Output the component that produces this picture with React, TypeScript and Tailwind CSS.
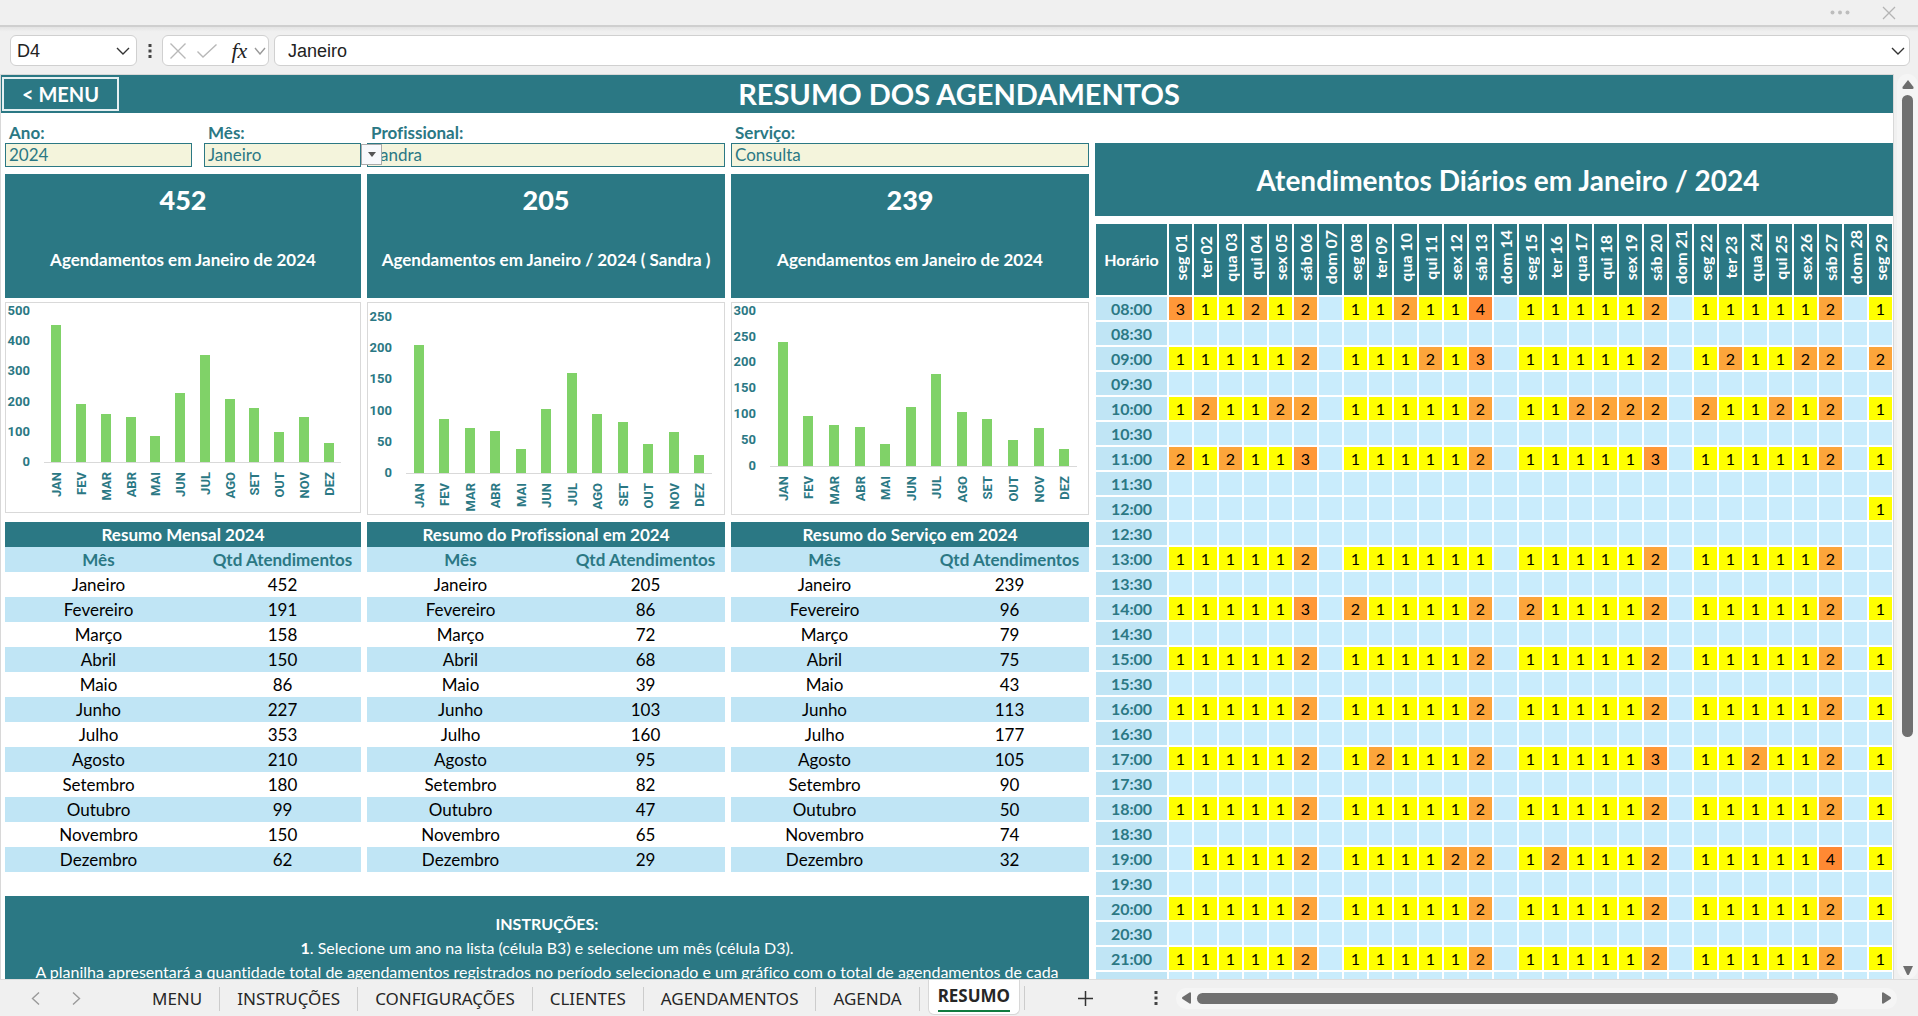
import React from "react";

const MONTHS = ["Janeiro", "Fevereiro", "Março", "Abril", "Maio", "Junho", "Julho", "Agosto", "Setembro", "Outubro", "Novembro", "Dezembro"];
const SHORT = ["JAN", "FEV", "MAR", "ABR", "MAI", "JUN", "JUL", "AGO", "SET", "OUT", "NOV", "DEZ"];

type Chart = {
  width: number;
  height: number;
  ticks: number[];
  tickRight: number;
  zeroY: number;
  tickGap: number;
  axisFrom: number;
  axisTo: number;
};

type Summary = { total: string; caption: string; heading: string; values: number[]; chart: Chart };

const SUMMARIES: Summary[] = [
  {
    total: "452",
    caption: "Agendamentos em Janeiro de 2024",
    heading: "Resumo Mensal 2024",
    values: [452, 191, 158, 150, 86, 227, 353, 210, 180, 99, 150, 62],
    chart: { width: 356, height: 211, ticks: [0, 100, 200, 300, 400, 500], tickRight: 25, zeroY: 160, tickGap: 30.2, axisFrom: 39, axisTo: 336 },
  },
  {
    total: "205",
    caption: "Agendamentos em Janeiro / 2024 ( Sandra )",
    heading: "Resumo do Profissional em 2024",
    values: [205, 86, 72, 68, 39, 103, 160, 95, 82, 47, 65, 29],
    chart: { width: 358, height: 213, ticks: [0, 50, 100, 150, 200, 250], tickRight: 25, zeroY: 171, tickGap: 31.2, axisFrom: 39, axisTo: 345 },
  },
  {
    total: "239",
    caption: "Agendamentos em Janeiro de 2024",
    heading: "Resumo do Serviço em 2024",
    values: [239, 96, 79, 75, 43, 113, 177, 105, 90, 50, 74, 32],
    chart: { width: 358, height: 213, ticks: [0, 50, 100, 150, 200, 250, 300], tickRight: 25, zeroY: 164, tickGap: 25.9, axisFrom: 39, axisTo: 346 },
  },
];

const WEEKDAYS = ["seg", "ter", "qua", "qui", "sex", "sáb", "dom"];
const DAYS = Array.from({ length: 29 }, (_, i) => `${WEEKDAYS[i % 7]} ${String(i + 1).padStart(2, "0")}`);

const FULL = "111112.111112.111112.111112.1";
const EMPTY = ".............................";
const HOURS: [string, string][] = [
  ["08:00", "311212.112114.111112.111112.1"],
  ["08:30", EMPTY],
  ["09:00", "111112.111213.111112.121122.2"],
  ["09:30", EMPTY],
  ["10:00", "121122.111112.112222.211212.1"],
  ["10:30", EMPTY],
  ["11:00", "212113.111112.111113.111112.1"],
  ["11:30", EMPTY],
  ["12:00", "............................1"],
  ["12:30", EMPTY],
  ["13:00", "111112.111111.111112.111112.."],
  ["13:30", EMPTY],
  ["14:00", "111113.211112.211112.111112.1"],
  ["14:30", EMPTY],
  ["15:00", FULL],
  ["15:30", EMPTY],
  ["16:00", FULL],
  ["16:30", EMPTY],
  ["17:00", "111112.121112.111113.112112.1"],
  ["17:30", EMPTY],
  ["18:00", FULL],
  ["18:30", EMPTY],
  ["19:00", ".11112.111122.121112.111114.1"],
  ["19:30", EMPTY],
  ["20:00", FULL],
  ["20:30", EMPTY],
  ["21:00", FULL],
  ["", EMPTY],
];

const HEAT: Record<string, string> = {
  "1": "bg-[#ffff00]",
  "2": "bg-[#fda53a]",
  "3": "bg-[#ff9838]",
  "4": "bg-[#ff8933]",
  ".": "bg-[#c9ecfc]",
};

const TABS = ["MENU", "INSTRUÇÕES", "CONFIGURAÇÕES", "CLIENTES", "AGENDAMENTOS", "AGENDA"];

function Chevron({ d, className, w = 14, h = 8 }: { d: string; className: string; w?: number; h?: number }) {
  return (
    <svg width={w} height={h} viewBox={`0 0 ${w} ${h}`} fill="none" stroke="currentColor" strokeWidth="1.4" className={className}>
      <path d={d} />
    </svg>
  );
}

function VerticalDots() {
  return (
    <svg width="4" height="16" viewBox="0 0 4 16" fill="#444444">
      <rect x="0.5" y="1" width="3" height="3" />
      <rect x="0.5" y="6.500" width="3" height="3" />
      <rect x="0.5" y="12" width="3" height="3" />
    </svg>
  );
}

function TitleStrip() {
  return (
    <div className="flex h-[27px] shrink-0 items-center justify-end gap-8 border-b-2 border-[#cfcfcf] bg-[#f0f0f0] pr-[22px]">
      <button aria-label="Mais opções">
        <svg width="20" height="5" viewBox="0 0 20 5" fill="#bdbdbd">
          <circle cx="2.500" cy="2.500" r="2" />
          <circle cx="10" cy="2.500" r="2" />
          <circle cx="17.500" cy="2.500" r="2" />
        </svg>
      </button>
      <button aria-label="Fechar">
        <svg width="14" height="14" viewBox="0 0 14 14" stroke="#b4b4b4" strokeWidth="1.3">
          <path d="M1 1 13 13M13 1 1 13" />
        </svg>
      </button>
    </div>
  );
}

function FormulaBar() {
  return (
    <div className="flex h-[47px] shrink-0 items-center bg-linear-to-b from-[#e4e4e4] to-[#f0f0f0] to-10% pr-2 pl-[10px] font-['Liberation_Sans',sans-serif] text-lg text-[#222222]">
      <div className="flex h-[31px] w-[127px] items-center justify-between rounded-md border border-[#d0d0d0] bg-white pr-1.5 pl-1.5">
        <input aria-label="Caixa de nome" defaultValue="D4" className="w-16 bg-transparent outline-none" />
        <Chevron d="M1 1 7 7 13 1" className="text-[#333333]" />
      </div>
      <div className="flex w-[25px] justify-center">
        <VerticalDots />
      </div>
      <div className="flex h-[31px] w-[107px] items-center justify-between rounded-md border border-[#d0d0d0] bg-white pr-0.5 pl-[7px]">
        <button aria-label="Cancelar">
          <svg width="16" height="16" viewBox="0 0 16 16" stroke="#b8b8b8" strokeWidth="1.4">
            <path d="M0.500 0.500 15.500 15.500M15.500 0.500 0.500 15.500" />
          </svg>
        </button>
        <button aria-label="Inserir" className="pl-1">
          <svg width="20" height="14" viewBox="0 0 20 14" fill="none" stroke="#b8b8b8" strokeWidth="1.400">
            <path d="M0.500 7.500 6 13 19.500 0.500" />
          </svg>
        </button>
        <button aria-label="Inserir função" className="pl-2 font-['Liberation_Serif',serif] text-[22px] leading-5 text-[#222222] italic">
          fx
        </button>
        <Chevron d="M1 1 6 7 11 1" w={12} className="text-[#999999]" />
      </div>
      <div className="ml-[5px] flex h-[31px] flex-1 items-center rounded-md border border-[#d0d0d0] bg-white pr-1 pl-[13px]">
        <input aria-label="Barra de fórmulas" defaultValue="Janeiro" className="flex-1 bg-transparent outline-none" />
        <Chevron d="M1 1 7 7 13 1" className="text-[#333333]" />
      </div>
    </div>
  );
}

function Filter({ id, label, value, children }: { id: string; label: string; value: string; children?: React.ReactNode }) {
  return (
    <div className="relative">
      <label htmlFor={id} className="block h-5 pl-1 leading-5 font-bold text-[#2b7884]">
        {label}
      </label>
      <select id={id} className="block h-6 w-full appearance-none border border-[#2b7884] bg-[#f4f4dc] pl-[3px] leading-[22px] text-[#2b7884]">
        <option>{value}</option>
      </select>
      {children}
    </div>
  );
}

function BarChart({ values, chart }: { values: number[]; chart: Chart }) {
  const step = (chart.axisTo - chart.axisFrom) / 12;
  const unit = chart.tickGap / chart.ticks[1];
  return (
    <svg
      viewBox={`0 0 ${chart.width} ${chart.height}`}
      className="block w-full font-['Roboto',sans-serif] text-[13px] font-bold"
      fill="#2b7884"
      shapeRendering="crispEdges"
    >
      <rect x="0.5" y="0.5" width={chart.width - 1} height={chart.height - 1} fill="#ffffff" stroke="#d9d9d9" />
      {chart.ticks.map((tick, i) => (
        <text key={tick} x={chart.tickRight} y={Math.round(chart.zeroY - i * chart.tickGap + 4)} textAnchor="end">
          {tick}
        </text>
      ))}
      {values.map((value, i) => {
        const center = chart.axisFrom + step * (i + 0.5);
        return (
          <React.Fragment key={SHORT[i]}>
            <rect x={Math.round(center - 5)} y={Math.round(chart.zeroY - value * unit)} width="10" height={Math.round(value * unit)} fill="#80d268" />
            <text textAnchor="end" transform={`translate(${center + 5} ${chart.zeroY + 10}) rotate(-90)`}>
              {SHORT[i]}
            </text>
          </React.Fragment>
        );
      })}
      <rect x={chart.axisFrom} y={chart.zeroY} width={chart.axisTo - chart.axisFrom} height="1" fill="#d9d9d9" />
    </svg>
  );
}

function SummaryColumn({ item }: { item: Summary }) {
  return (
    <section>
      <div className="flex h-[124px] flex-col items-center bg-[#2b7884] font-bold text-white">
        <strong className="mt-2.5 text-[27px] leading-8">{item.total}</strong>
        <span className="mt-8 leading-6">{item.caption}</span>
      </div>
      <div className="mt-1 h-[220px]">
        <BarChart values={item.values} chart={item.chart} />
      </div>
      <table className="w-full table-fixed border-collapse text-center text-black">
        <colgroup>
          <col className="w-[187px]" />
          <col />
        </colgroup>
        <thead>
          <tr className="h-[25px] bg-[#2b7884] leading-5 text-white">
            <th colSpan={2} className="p-0">{item.heading}</th>
          </tr>
          <tr className="h-[25px] bg-[#c0e5f5] leading-5 text-[#2b7884]">
            <th className="p-0">Mês</th>
            <th className="p-0 pl-3">Qtd Atendimentos</th>
          </tr>
        </thead>
        <tbody>
          {MONTHS.map((month, i) => (
            <tr key={month} className="h-[25px] leading-5 even:bg-[#c0e5f5]">
              <td className="p-0">{month}</td>
              <td className="p-0 pl-3">{item.values[i]}</td>
            </tr>
          ))}
        </tbody>
      </table>
    </section>
  );
}

function DailyPanel() {
  return (
    <section className="pt-[30px] text-base">
      <h2 className="flex h-[73px] items-center justify-center bg-[#2b7884] pl-7 text-[28px] font-bold text-white">
        Atendimentos Diários em Janeiro / 2024
      </h2>
      <div className="pt-2 pr-px">
        <table className="w-full table-fixed border-separate border-spacing-0 text-center leading-5">
          <colgroup>
            <col className="w-[72px]" />
            {DAYS.map((day) => (
              <col key={day} />
            ))}
          </colgroup>
          <thead>
            <tr className="h-[73px] text-white">
              <th className="border-b-2 border-l border-white bg-[#2b7884] p-0">Horário</th>
              {DAYS.map((day) => (
                <th key={day} className="border-b-2 border-l-2 border-white bg-[#2b7884] p-0">
                  <span className="inline-block rotate-180 whitespace-nowrap [writing-mode:vertical-rl]">{day}</span>
                </th>
              ))}
            </tr>
          </thead>
          <tbody>
            {HOURS.map(([hour, counts], row) => (
              <tr key={row} className="h-[25px]">
                <th className="border-b-2 border-l border-white bg-[#c0e5f5] p-0 text-[#2b7884]">{hour}</th>
                {counts.split("").map((count, i) => (
                  <td key={DAYS[i]} className={`border-b-2 border-l-2 border-white p-0 text-black ${HEAT[count]}`}>
                    {count === "." ? "" : count}
                  </td>
                ))}
              </tr>
            ))}
          </tbody>
        </table>
      </div>
    </section>
  );
}

function Sheet() {
  return (
    <main className="min-w-0 flex-1 overflow-hidden border-t border-r border-l border-[#d8d8d8] bg-white font-['Lato',sans-serif] text-[17px] [font-variant-ligatures:none]">
      <header className="grid h-[38px] grid-cols-[1fr_auto_1fr] items-center bg-[#2b7884] text-white">
        <button className="ml-px h-[34px] w-[117px] border-2 border-[#e6f0f2] text-xl leading-7 font-bold">&lt; MENU</button>
        <h1 className="pl-6 text-[29px] leading-9 font-bold">RESUMO DOS AGENDAMENTOS</h1>
      </header>
      <div className="grid grid-cols-[1084fr_798fr] gap-1.5 pl-1">
        <div className="min-w-0">
          <div className="grid grid-cols-[356fr_358fr_358fr] gap-x-1.5 pt-2.5">
            <div className="grid grid-cols-[187fr_157fr] gap-3">
              <Filter id="ano" label="Ano:" value="2024" />
              <Filter id="mes" label="Mês:" value="Janeiro">
                <button
                  aria-label="Abrir lista de meses"
                  className="absolute top-[21px] left-full z-10 flex h-[21px] w-[21px] items-center justify-center border border-[#ababab] bg-[#f8f9fc]"
                >
                  <svg width="8" height="5" viewBox="0 0 8 5" fill="#555555">
                    <path d="M0 0H8L4 5Z" />
                  </svg>
                </button>
              </Filter>
            </div>
            <Filter id="profissional" label="Profissional:" value="Sandra" />
            <Filter id="servico" label="Serviço:" value="Consulta" />
          </div>
          <div className="mt-[7px] grid grid-cols-[356fr_358fr_358fr] gap-x-1.5">
            {SUMMARIES.map((item) => (
              <SummaryColumn key={item.heading} item={item} />
            ))}
          </div>
          <div className="mt-6 bg-[#2b7884] pt-4 pb-24 text-center text-base leading-6 text-white">
            <p className="font-bold">INSTRUÇÕES:</p>
            <p>
              <b>1</b>. Selecione um ano na lista (célula B3) e selecione um mês (célula D3).
            </p>
            <p>
              A planilha apresentará a quantidade total de agendamentos registrados no período selecionado e um gráfico com o total de agendamentos de cada
            </p>
          </div>
        </div>
        <DailyPanel />
      </div>
    </main>
  );
}

function VerticalScroll() {
  return (
    <div className="flex w-6 shrink-0 flex-col bg-[#f0f0f0] pl-[3px]">
      <div className="flex w-[21px] flex-1 flex-col items-center rounded-full bg-[#f5f5f5] pt-1.5 pb-1">
        <svg width="12" height="9" viewBox="0 0 12 9" fill="#6e6e6e">
          <path d="M6 0 11.500 7Q12 9 10.500 9H1.500Q0 9 0.500 7Z" />
        </svg>
        <div className="mt-1.5 h-[642px] w-[11px] rounded-full bg-[#707070]" />
        <svg width="10" height="9" viewBox="0 0 10 9" fill="#6e6e6e" className="mt-auto">
          <path d="M0 0H10L6 8.500Q5 9.500 4 8.500Z" />
        </svg>
      </div>
    </div>
  );
}

function TabBar() {
  return (
    <footer className="flex h-[37px] shrink-0 items-center border-t border-[#dddddd] bg-[#f0f0f0] font-['Noto_Sans',sans-serif] text-[17px] text-[#262626]">
      <div className="flex w-[135px] gap-8 pl-[31px]">
        <button aria-label="Planilha anterior">
          <Chevron w={9} h={13} d="M8 0.500 1.500 6.500 8 12.500" className="text-[#9a9a9a]" />
        </button>
        <button aria-label="Próxima planilha">
          <Chevron w={9} h={13} d="M1 0.500 7.500 6.500 1 12.500" className="text-[#9a9a9a]" />
        </button>
      </div>
      <nav className="flex h-full items-center">
        {TABS.map((tab) => (
          <button key={tab} className="mt-0.5 h-6 border-r border-[#cccccc] px-[17px] leading-6">
            {tab}
          </button>
        ))}
        <button className="ml-2 flex h-[35px] flex-col items-center self-start rounded-b-md border border-t-0 border-[#d8d8d8] bg-white px-[9px] font-bold">
          <span className="border-b-2 border-[#107c41] pt-0.5 leading-7">RESUMO</span>
        </button>
        <span className="ml-1 h-6 w-px bg-[#cccccc]" />
      </nav>
      <button aria-label="Nova planilha" className="ml-[53px]">
        <svg width="15" height="15" viewBox="0 0 15 15" stroke="#333333" strokeWidth="1.500">
          <path d="M7.500 0V15M0 7.500H15" />
        </svg>
      </button>
      <div className="ml-auto flex w-[764px] items-center pr-[21px]">
        <VerticalDots />
        <div className="ml-[18px] flex h-[21px] flex-1 items-center rounded-full bg-[#f5f5f5] px-1.5">
          <svg width="9" height="12" viewBox="0 0 9 12" fill="#6e6e6e">
            <path d="M9 1V11Q8.500 12 7.500 11.500L0.500 7Q-0.500 6 0.500 5L7.500 0.500Q8.500 0 9 1Z" />
          </svg>
          <div className="ml-1.5 h-[11px] w-[641px] rounded-full bg-[#707070]" />
          <svg width="9" height="12" viewBox="0 0 9 12" fill="#6e6e6e" className="ml-auto">
            <path d="M0 1V11Q0.500 12 1.500 11.500L8.500 7Q9.500 6 8.500 5L1.500 0.500Q0.500 0 0 1Z" />
          </svg>
        </div>
      </div>
    </footer>
  );
}

export default function App() {
  return (
    <div className="flex h-screen flex-col overflow-hidden bg-[#f0f0f0]">
      <TitleStrip />
      <FormulaBar />
      <div className="flex min-h-0 flex-1">
        <Sheet />
        <VerticalScroll />
      </div>
      <TabBar />
    </div>
  );
}
